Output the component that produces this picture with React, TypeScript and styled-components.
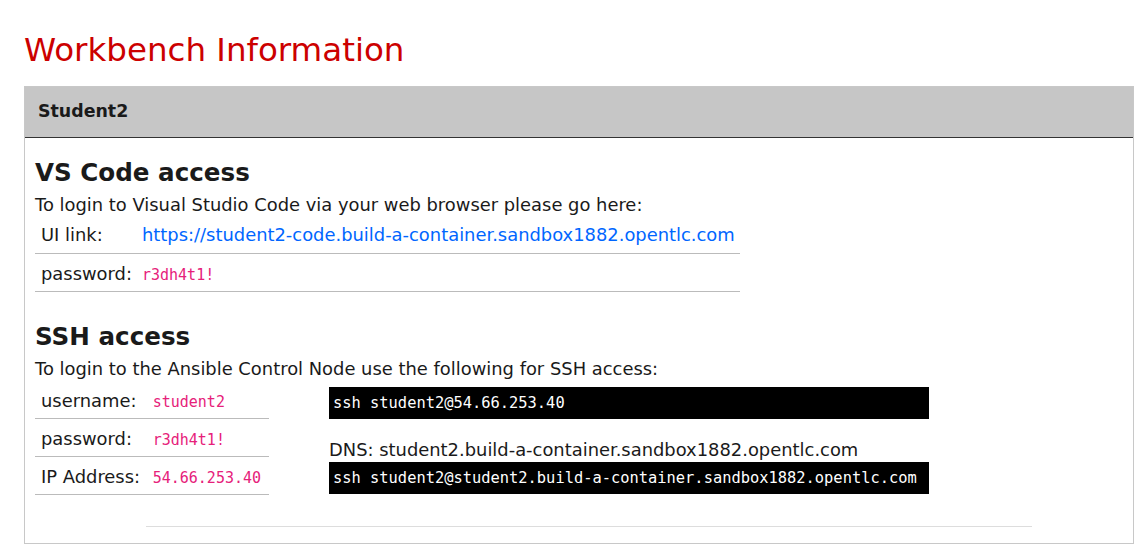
import React from "react";
import styled, { createGlobalStyle } from "styled-components";

const Global = createGlobalStyle`
  html, body { margin: 0; padding: 0; background: #fff; }
  body {
    font-family: "DejaVu Sans", Verdana, sans-serif;
    font-size: 17.9px;
    line-height: 1.4;
    color: #1a1a1a;
  }
  * { box-sizing: border-box; }
`;

const Page = styled.div`
  padding: 28px 13px 0 24px;
`;

const Title = styled.h1`
  margin: 0 0 13px 0;
  font-size: 32.5px;
  font-weight: 400;
  line-height: 45px;
  color: #cc0000;
`;

const Panel = styled.section`
  border: 1px solid #c8c8c8;
  width: 1110px;
`;

const PanelHeader = styled.div`
  background: #c6c6c6;
  border-bottom: 1px solid #333;
  padding: 12px 13px 13px;
  font-weight: 700;
  font-size: 17.4px;
  line-height: 25px;
  color: #1a1a1a;
`;

const PanelBody = styled.div`
  padding: 20px 10px 16px;
`;

const SectionTitle = styled.h2<{ $first?: boolean }>`
  margin: ${(p) => (p.$first ? "0" : "30px")} 0 0 0;
  font-size: 24.6px;
  font-weight: 700;
  line-height: 30px;
  color: #1a1a1a;
`;

const Lead = styled.p`
  margin: 6px 0 0 0;
  line-height: 21px;
  color: #1a1a1a;
`;

const Table = styled.table<{ $width?: number }>`
  border-collapse: collapse;
  color: #1a1a1a;
  ${(p) => (p.$width ? `width: ${p.$width}px;` : "")}
`;

const Cell = styled.td`
  height: 38px;
  padding: 2px 5px 0 6px;
  border-bottom: 1px solid #bbb;
  white-space: nowrap;
  line-height: 25px;
  vertical-align: middle;
  &:first-child { padding-right: 4px; }
`;

const Link = styled.a`
  color: #0066ff;
  text-decoration: none;
`;

const Code = styled.code`
  font-family: "DejaVu Sans Mono", Menlo, monospace;
  font-size: 15px;
  line-height: 1;
  color: #e6217a;
`;

const SshRow = styled.div`
  display: flex;
  align-items: flex-start;
  gap: 60px;
  margin-top: 2px;
`;

const Commands = styled.div`
  display: flex;
  flex-direction: column;
  padding-top: 6px;
`;

const Terminal = styled.pre`
  margin: 0;
  width: 600px;
  height: 32px;
  background: #000;
  color: #fff;
  font-family: "DejaVu Sans Mono", Menlo, monospace;
  font-size: 15.4px;
  line-height: 32px;
  padding: 0 4px;
`;

const Dns = styled.div`
  margin-top: 19px;
  line-height: 24px;
  color: #1a1a1a;
`;

const Rule = styled.hr`
  margin: 31px 0 0 111px;
  width: 886px;
  height: 0;
  border: 0;
  border-top: 1px solid #ddd;
`;

export default function App() {
  return (
    <>
      <Global />
      <Page>
        <Title>Workbench Information</Title>
        <Panel>
          <PanelHeader>Student2</PanelHeader>
          <PanelBody>
            <SectionTitle $first>VS Code access</SectionTitle>
            <Lead>To login to Visual Studio Code via your web browser please go here:</Lead>
            <Table>
              <tbody>
                <tr>
                  <Cell>UI link:</Cell>
                  <Cell>
                    <Link href="#">https://student2-code.build-a-container.sandbox1882.opentlc.com</Link>
                  </Cell>
                </tr>
                <tr>
                  <Cell>password:</Cell>
                  <Cell>
                    <Code>r3dh4t1!</Code>
                  </Cell>
                </tr>
              </tbody>
            </Table>

            <SectionTitle>SSH access</SectionTitle>
            <Lead>To login to the Ansible Control Node use the following for SSH access:</Lead>
            <SshRow>
              <Table $width={234}>
                <tbody>
                  <tr>
                    <Cell>username:</Cell>
                    <Cell>
                      <Code>student2</Code>
                    </Cell>
                  </tr>
                  <tr>
                    <Cell>password:</Cell>
                    <Cell>
                      <Code>r3dh4t1!</Code>
                    </Cell>
                  </tr>
                  <tr>
                    <Cell>IP Address:</Cell>
                    <Cell>
                      <Code>54.66.253.40</Code>
                    </Cell>
                  </tr>
                </tbody>
              </Table>
              <Commands>
                <Terminal>ssh student2@54.66.253.40</Terminal>
                <Dns>DNS: student2.build-a-container.sandbox1882.opentlc.com</Dns>
                <Terminal>ssh student2@student2.build-a-container.sandbox1882.opentlc.com</Terminal>
              </Commands>
            </SshRow>
            <Rule />
          </PanelBody>
        </Panel>
      </Page>
    </>
  );
}
